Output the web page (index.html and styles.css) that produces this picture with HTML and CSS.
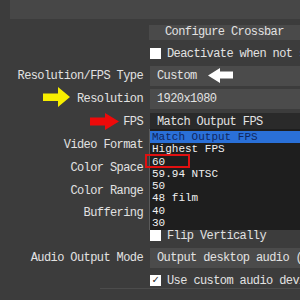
FILE: index.html
```html
<!DOCTYPE html>
<html lang="en">
<head>
    <meta charset="UTF-8">
    <title>Video Capture Device</title>
    <link rel="stylesheet" href="styles.css">
</head>
<body>

    <div class="top-panel"></div>

    <div class="form">
        <!-- crossbar -->
        <div class="label"></div>
        <div class="field"><div class="button">Configure Crossbar</div></div>

        <div class="label"></div>
        <div class="field"><div class="check"><span class="box"></span>Deactivate when not showing</div></div>

        <div class="label">Resolution/FPS Type</div>
        <div class="field">
            <div class="combo">Custom
                <svg class="arrow-white" width="25" height="15" viewBox="0 0 25 15"><polygon points="0,7.5 12,0 12,3.5 25,3.5 25,10.5 12,10.5 12,15" fill="#fff"/></svg>
            </div>
        </div>

        <div class="label">
            <svg class="arrow-yellow" width="27" height="20" viewBox="0 0 27 20"><polygon points="0,6.5 15,6.5 15,0 27,10 15,20 15,14 0,14" fill="#f7ee00"/></svg>
            Resolution
        </div>
        <div class="field"><div class="combo">1920x1080</div></div>

        <div class="label">
            <svg class="arrow-red" width="29" height="17" viewBox="0 0 29 17"><polygon points="0,4.5 15,4.5 15,0 29,8.5 15,17 15,12.5 0,12.5" fill="#ee0a0a"/></svg>
            FPS
        </div>
        <div class="field fps">
            <div class="combo open">Match Output FPS</div>
            <!-- open dropdown -->
            <ul class="dropdown">
                <li class="selected">Match Output FPS</li>
                <li>Highest FPS</li>
                <li>60</li>
                <li>59.94 NTSC</li>
                <li>50</li>
                <li>48 film</li>
                <li>40</li>
                <li>30</li>
            </ul>
            <div class="mark"></div>
        </div>

        <div class="label">Video Format</div>
        <div class="field"></div>

        <div class="label">Color Space</div>
        <div class="field"></div>

        <div class="label">Color Range</div>
        <div class="field"></div>

        <div class="label">Buffering</div>
        <div class="field"></div>

        <div class="label"></div>
        <div class="field"><div class="check"><span class="box"></span>Flip Vertically</div></div>

        <div class="label">Audio Output Mode</div>
        <div class="field"><div class="combo">Output desktop audio (DirectSound)</div></div>

        <div class="label"></div>
        <div class="field"><div class="check"><span class="box checked">&#10003;</span>Use custom audio device</div></div>
    </div>

    <div class="footer-line"></div>

</body>
</html>
```

FILE: styles.css
```css
body {
    margin: 0;
    padding: 0;
    width: 300px;
    height: 300px;
    overflow: hidden;
    background-color: #3c3c3c;
    color: #e2e2e2;
    font-family: "Liberation Mono", "DejaVu Sans Mono", monospace;
    font-size: 12px;
    letter-spacing: -0.6px;
}
.top-panel {
    height: 19px;
    margin-left: 10px;
    background-color: #474747;
}
/* form grid: labels right, fields left */
.form {
    display: grid;
    grid-template-columns: 143px 150px;
    grid-template-rows: 22px 21px 23px 23px 23px 23px 23px 23px 22.5px 22.5px 22.5px 22.5px;
    column-gap: 7px;
    margin-top: 2px;
}
.label {
    display: flex;
    align-items: center;
    justify-content: flex-end;
    gap: 4px;
    white-space: nowrap;
}
.field {
    display: flex;
    align-items: center;
    white-space: nowrap;
    position: relative;
}
.button {
    width: 100%;
    margin-left: -1px;
    height: 15px;
    line-height: 15px;
    padding-left: 16px;
    background-color: #4a4a4a;
}
.combo {
    display: flex;
    align-items: center;
    width: 100%;
    height: 20px;
    padding-left: 7px;
    background-color: #4b4b4b;
    overflow: hidden;
}
.combo.open {
    height: 18px;
    background-color: #2a2a2a;
}
.arrow-white {
    margin-left: 11px;
    flex: none;
}
.arrow-yellow {
    margin-right: 3px;
    margin-top: -3px;
}
.check {
    display: flex;
    align-items: center;
    gap: 6px;
}
.box {
    width: 11px;
    height: 11px;
    background-color: #fff;
    color: #222;
    font-size: 11px;
    line-height: 11px;
    letter-spacing: 0;
    text-align: center;
    flex: none;
}
/* 🔹 open list under FPS */
.dropdown {
    position: absolute;
    top: 19px;
    left: -1px;
    width: 152px;
    margin: 0;
    padding: 2px 0 1px 0;
    list-style: none;
    background-color: #1e1e1e;
    border-left: 1px solid #5a5a5a;
    color: #f0f0f0;
    font-size: 11px;
    letter-spacing: 0;
    z-index: 10;
}
.dropdown li {
    height: 12.3px;
    line-height: 12.3px;
    padding-left: 2px;
}
.dropdown li.selected {
    background-color: #2a70d8;
    color: #10265e;
}
.mark {
    position: absolute;
    top: 44px;
    left: -5px;
    width: 41px;
    height: 10px;
    border: 2px solid #e01010;
    z-index: 11;
}
.footer-line {
    margin-left: 100px;
    margin-top: -4px;
    border-top: 1px solid #4c4c4c;
}
```
